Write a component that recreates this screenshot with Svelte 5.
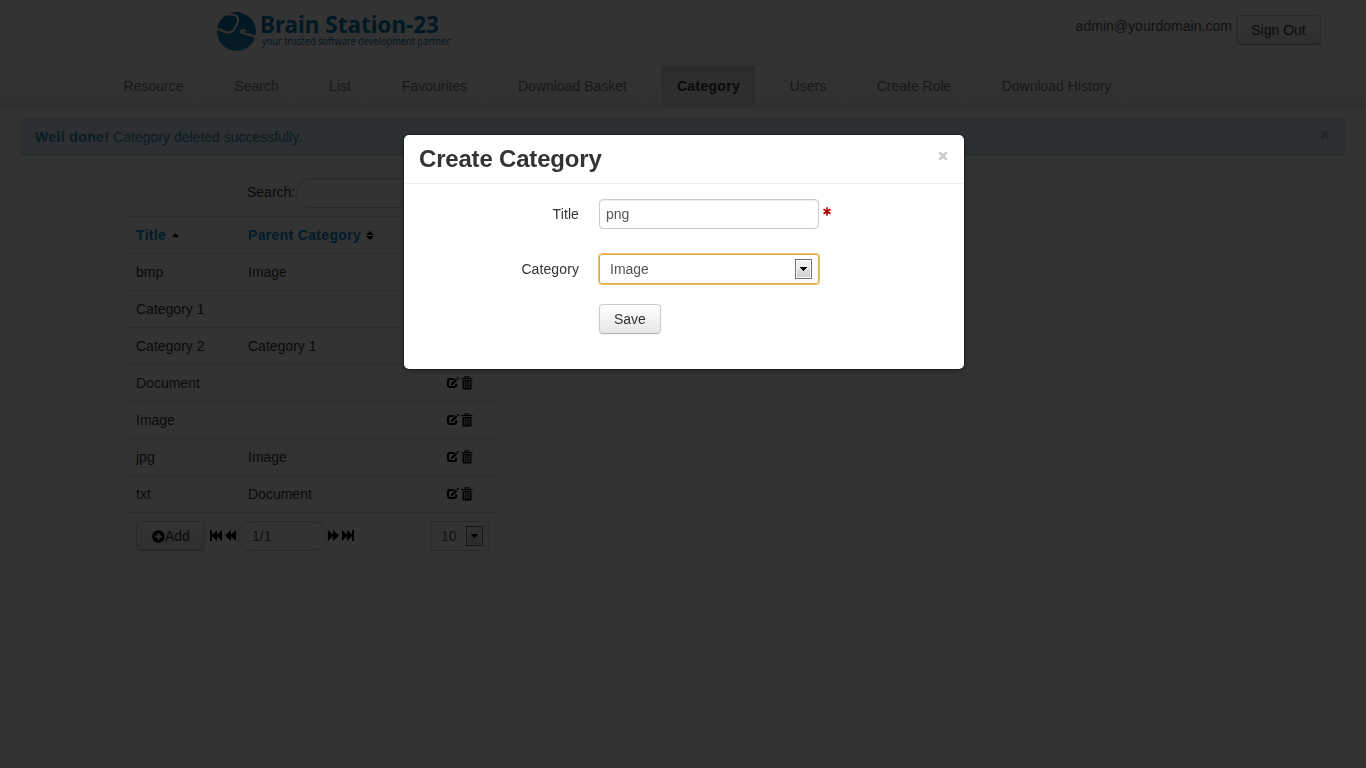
<script>
  const navItems = [
    { label: 'Resource', width: 91 },
    { label: 'Search', width: 75 },
    { label: 'List', width: 52 },
    { label: 'Favourites', width: 97 },
    { label: 'Download Basket', width: 139 },
    { label: 'Category', width: 93, active: true },
    { label: 'Users', width: 66 },
    { label: 'Create Role', width: 106 },
    { label: 'Download History', width: 139 }
  ];
  const rows = [
    ['bmp', 'Image'],
    ['Category 1', ''],
    ['Category 2', 'Category 1'],
    ['Document', ''],
    ['Image', ''],
    ['jpg', 'Image'],
    ['txt', 'Document']
  ];
</script>

{#snippet dropButton()}
  <span class="drop">
    <svg width="7" height="4" viewBox="0 0 7 4" shape-rendering="crispEdges"><path d="M0 0h7v1H6v1H5v1H4v1H3V3H2V2H1V1H0z" /></svg>
  </span>
{/snippet}

{#snippet closeIcon()}
  <svg width="10" height="10" viewBox="0 0 10 10"><path d="M1.3 1.3l7.4 7.4M8.7 1.3L1.3 8.7" stroke="currentColor" stroke-width="2.7" /></svg>
{/snippet}

<div class="page">
  <header>
    <svg class="logo" width="240" height="46" viewBox="0 0 240 46">
      <defs>
        <linearGradient id="globe" x1="0" y1="0" x2="0" y2="1">
          <stop offset="0" stop-color="#006c9f" />
          <stop offset="1" stop-color="#2a8db8" />
        </linearGradient>
      </defs>
      <circle cx="20.5" cy="22.5" r="19.5" fill="url(#globe)" />
      <g fill="none" stroke="#fff" stroke-linecap="round">
        <path d="M.5 20C5 20 8 24 13 23.5C18 23 19 19 21 15C23.5 10 22 6.5 17 5.5C13 4.7 9 5.5 6 7" stroke-width="2" />
        <path d="M39.5 28C35 26 30 25 27 24C23.5 23 25 21 29 21.5" stroke-width="2.2" />
        <path d="M27 4.5C30 4.5 33 6.5 36 9" stroke-width="1.3" />
        <path d="M11 40.5C13 42 16 42.5 19 42" stroke-width="1" />
      </g>
      <text x="44" y="24" class="brand" textLength="179" lengthAdjust="spacingAndGlyphs">Brain Station-23</text>
      <text x="46" y="36" class="tag" textLength="188" lengthAdjust="spacingAndGlyphs">your trusted software development partner</text>
    </svg>
    <div class="account">
      <span class="mail">admin@yourdomain.com</span>
      <button class="btn out">Sign Out</button>
    </div>
  </header>

  <nav>
    {#each navItems as item}
      <a class:active={item.active} style="width: {item.width}px">{item.label}</a>
    {/each}
  </nav>

  <div class="alert">
    <span><strong>Well done!</strong> Category deleted successfully.</span>
    <span class="dismiss">{@render closeIcon()}</span>
  </div>

  <main>
    <div class="search"><span>Search:</span><span class="pill"></span></div>
    <div class="row head">
      <span>Title <svg class="up" width="7" height="4" viewBox="0 0 7 4"><path d="M0 4L3.5 0 7 4z" /></svg></span>
      <span>Parent Category <svg width="8" height="9" viewBox="0 0 8 9"><path d="M0 4L4 0l4 4zM0 5h8L4 9z" /></svg></span>
    </div>
    {#each rows as [title, parent]}
      <div class="row">
        <span>{title}</span>
        <span>{parent}</span>
        <span class="actions">
          <svg width="14" height="13" viewBox="0 0 14 13">
            <path d="M8 3.1H4.2Q2 3.1 2 5.2v3.6Q2 11 4.2 11H8q2.2 0 2.2-2.2V7.6" fill="none" stroke="#000" stroke-width="2" />
            <path d="M5 7.2l4.9-4.8 1.6 1.6-4.8 4.7-2.1.5zM10.6 1.7l1-1 1.6 1.6-1 1z" />
          </svg>
          <svg width="12" height="14" viewBox="0 0 12 14">
            <path d="M3.5 2V.3h5V2h3v1.2H.5V2zm1.1-.7V2h2.8v-.7zM1.5 4h9v8.7q0 .8-.8.8H2.3q-.8 0-.8-.8z" fill-rule="evenodd" />
            <path d="M3.4 5v7M5.1 5v7M6.9 5v7M8.6 5v7" stroke="#fff" stroke-width=".7" />
          </svg>
        </span>
      </div>
    {/each}
    <div class="row foot">
      <button class="btn add">
        <svg width="13" height="13" viewBox="0 0 13 13"><circle cx="6.5" cy="6.5" r="6.2" /><path d="M6.5 3v7M3 6.5h7" stroke="#eee" stroke-width="2" /></svg>Add
      </button>
      <svg class="first" width="13" height="11" viewBox="0 0 13 11"><path d="M0 0h2v4.7L7 0v4.7L12 0v11L7 6.3V11L2 6.3V11H0z" /></svg>
      <svg class="prev" width="12" height="11" viewBox="0 0 12 11"><path d="M6 0v4.7L11 0v11L6 6.3V11L0 5.5z" /></svg>
      <span class="pill pager">1/1</span>
      <svg class="next" width="12" height="11" viewBox="0 0 12 11"><path d="M0 0l5 4.7V0l6 5.5L5 11V6.3L0 11z" /></svg>
      <svg class="last" width="13" height="11" viewBox="0 0 13 11"><path d="M0 0l5 4.7V0l5 4.7V0h2v11h-2V6.3L5 11V6.3L0 11z" /></svg>
      <span class="select size">10{@render dropButton()}</span>
    </div>
  </main>
</div>

<div class="backdrop"></div>

<div class="modal">
  <div class="modal-head">
    <h3>Create Category</h3>
    <span class="close">{@render closeIcon()}</span>
  </div>
  <form>
    <div class="field">
      <label for="title">Title</label>
      <input id="title" type="text" value="png" />
      <svg class="star" width="8" height="9" viewBox="0 0 8 9"><path d="M4 .3v8.4M.5 2.3l7 4.4M7.5 2.3l-7 4.4" stroke="#a80000" stroke-width="1.6" /></svg>
    </div>
    <div class="field second">
      <span class="label">Category</span>
      <span class="select focused">Image{@render dropButton()}</span>
    </div>
    <button class="btn save" type="button">Save</button>
  </form>
</div>

<style>
  :global(body) {
    margin: 0;
    background: #fff;
    overflow: hidden;
  }
  .page,
  .modal,
  .btn,
  input {
    font: 14px/20px "Liberation Sans", Arial, sans-serif;
    color: #333;
  }
  .page {
    height: 768px;
  }
  svg {
    display: block;
    flex: none;
    overflow: visible;
  }
  .btn {
    box-sizing: border-box;
    height: 30px;
    padding: 0 14px;
    border: 1px solid #ccc;
    border-color: #ccc #ccc #b3b3b3;
    border-radius: 4px;
    background: linear-gradient(#fff, #e6e6e6);
    box-shadow: inset 0 1px 0 rgba(255, 255, 255, 0.2), 0 1px 2px rgba(0, 0, 0, 0.05);
    white-space: nowrap;
  }
  header {
    display: flex;
    justify-content: space-between;
    height: 65px;
    padding: 0 45px 0 216px;
  }
  .logo {
    margin-top: 9px;
  }
  .brand {
    font: bold 23px "Noto Sans", "Open Sans", sans-serif;
    fill: #0079ad;
  }
  .tag {
    font: 10px "Noto Sans", "Open Sans", sans-serif;
    fill: #1579a6;
  }
  .account {
    display: flex;
    gap: 4px;
    padding-top: 15px;
  }
  .mail {
    color: #555;
    margin-top: 1px;
    letter-spacing: 0.03px;
  }
  .out {
    width: 85px;
  }
  nav {
    display: flex;
    gap: 20px;
    height: 40px;
    padding-left: 108px;
    background: linear-gradient(#fff, #f2f2f2);
    border-bottom: 1px solid #d4d4d4;
    box-shadow: 0 1px 4px rgba(0, 0, 0, 0.15);
  }
  nav a {
    color: #777;
    line-height: 42px;
    text-align: center;
    white-space: nowrap;
    box-shadow: -1px 0 #f2f2f2, 1px 0 #fff;
  }
  nav .active {
    margin-top: 1px;
    line-height: 40px;
    color: #333;
    font-weight: bold;
    letter-spacing: 0.3px;
    background: #e5e5e5;
    box-shadow: inset 0 3px 8px rgba(0, 0, 0, 0.125);
  }
  .alert {
    display: flex;
    justify-content: space-between;
    box-sizing: border-box;
    height: 38px;
    margin: 12px 20px 0;
    padding: 8px 15px 0 14px;
    color: #3a87ad;
    background: #d9edf7;
    border: 1px solid #bce8f1;
    border-radius: 4px;
  }
  .alert strong {
    letter-spacing: 0.38px;
  }
  .dismiss {
    color: #aebec6;
    margin-top: 3px;
  }
  main {
    width: 370px;
    margin: 22px 0 0 128px;
  }
  .search {
    display: flex;
    align-items: center;
    height: 30px;
    padding: 0 0 8px 119px;
    line-height: 28px;
  }
  .search span:first-child {
    width: 49px;
    margin-top: -2px;
  }
  .pill {
    box-sizing: border-box;
    width: 200px;
    height: 30px;
    border: 1px solid #ccc;
    border-radius: 15px;
    box-shadow: inset 0 1px 1px rgba(0, 0, 0, 0.075);
  }
  .row {
    display: grid;
    grid-template-columns: 112px 198px 1fr;
    align-items: center;
    box-sizing: border-box;
    height: 37px;
    padding-left: 8px;
    border-top: 1px solid #ddd;
  }
  .head span {
    display: flex;
    align-items: center;
    gap: 5px;
    color: #08c;
    font-weight: bold;
    letter-spacing: 0.33px;
  }
  .head svg {
    fill: #000;
  }
  .head .up {
    margin-left: 1px;
  }
  .actions {
    display: flex;
    gap: 1px;
    margin-top: -1px;
  }
  .foot {
    display: flex;
    height: 47px;
  }
  .foot > svg {
    margin-top: -1px;
  }
  .add {
    display: flex;
    align-items: center;
    width: 69px;
    padding-left: 15px;
  }
  .first {
    margin-left: 5px;
  }
  .prev {
    margin-left: 2px;
  }
  .pager {
    width: 90px;
    padding-left: 14px;
    line-height: 28px;
    color: #555;
  }
  .next {
    margin-left: 1px;
  }
  .last {
    margin-left: 2px;
  }
  .select {
    display: flex;
    align-items: center;
    justify-content: space-between;
    box-sizing: border-box;
    width: 220px;
    height: 30px;
    padding: 0 6px 0 10px;
    border: 1px solid #ccc;
    border-radius: 4px;
    color: #555;
  }
  .size {
    width: 60px;
    margin-left: 75px;
  }
  .drop {
    display: flex;
    align-items: center;
    justify-content: center;
    box-sizing: border-box;
    width: 17px;
    height: 20px;
    border: 1px solid #707070;
    background: linear-gradient(#f2f2f2, #ebebeb 50%, #ddd 50%, #cfcfcf);
    box-shadow: inset 0 0 0 1px #fcfcfc;
  }
  .backdrop {
    position: fixed;
    inset: 0;
    background: rgba(0, 0, 0, 0.8);
  }
  .modal {
    position: fixed;
    left: 404px;
    top: 135px;
    width: 560px;
    height: 234px;
    border-radius: 5px;
    background: #fff;
    box-shadow: 0 3px 7px rgba(0, 0, 0, 0.3), 0 0 0 1px rgba(0, 0, 0, 0.3);
  }
  .modal-head {
    display: flex;
    justify-content: space-between;
    height: 48px;
    padding: 0 16px 0 15px;
    border-bottom: 1px solid #eee;
  }
  h3 {
    margin: 0;
    font-size: 24px;
    line-height: 48px;
    letter-spacing: -0.19px;
  }
  .close {
    margin-top: 16px;
    color: #ccc;
  }
  .field {
    display: flex;
    height: 30px;
    margin-top: 15px;
    line-height: 30px;
  }
  .second {
    margin-top: 25px;
  }
  label,
  .label {
    width: 175px;
    margin-right: 20px;
    text-align: right;
    letter-spacing: 0.1px;
  }
  input {
    box-sizing: border-box;
    width: 220px;
    height: 30px;
    padding: 0 6px;
    border: 1px solid #ccc;
    border-radius: 4px;
    color: #555;
    box-shadow: inset 0 1px 1px rgba(0, 0, 0, 0.075);
    outline: none;
  }
  .star {
    margin: 8px 0 0 4px;
  }
  .focused {
    border-color: #d9ab4d;
    border-radius: 3px;
    box-shadow: 0 0 0 1px #edc268;
  }
  .save {
    display: block;
    margin: 20px 0 0 195px;
  }
</style>
